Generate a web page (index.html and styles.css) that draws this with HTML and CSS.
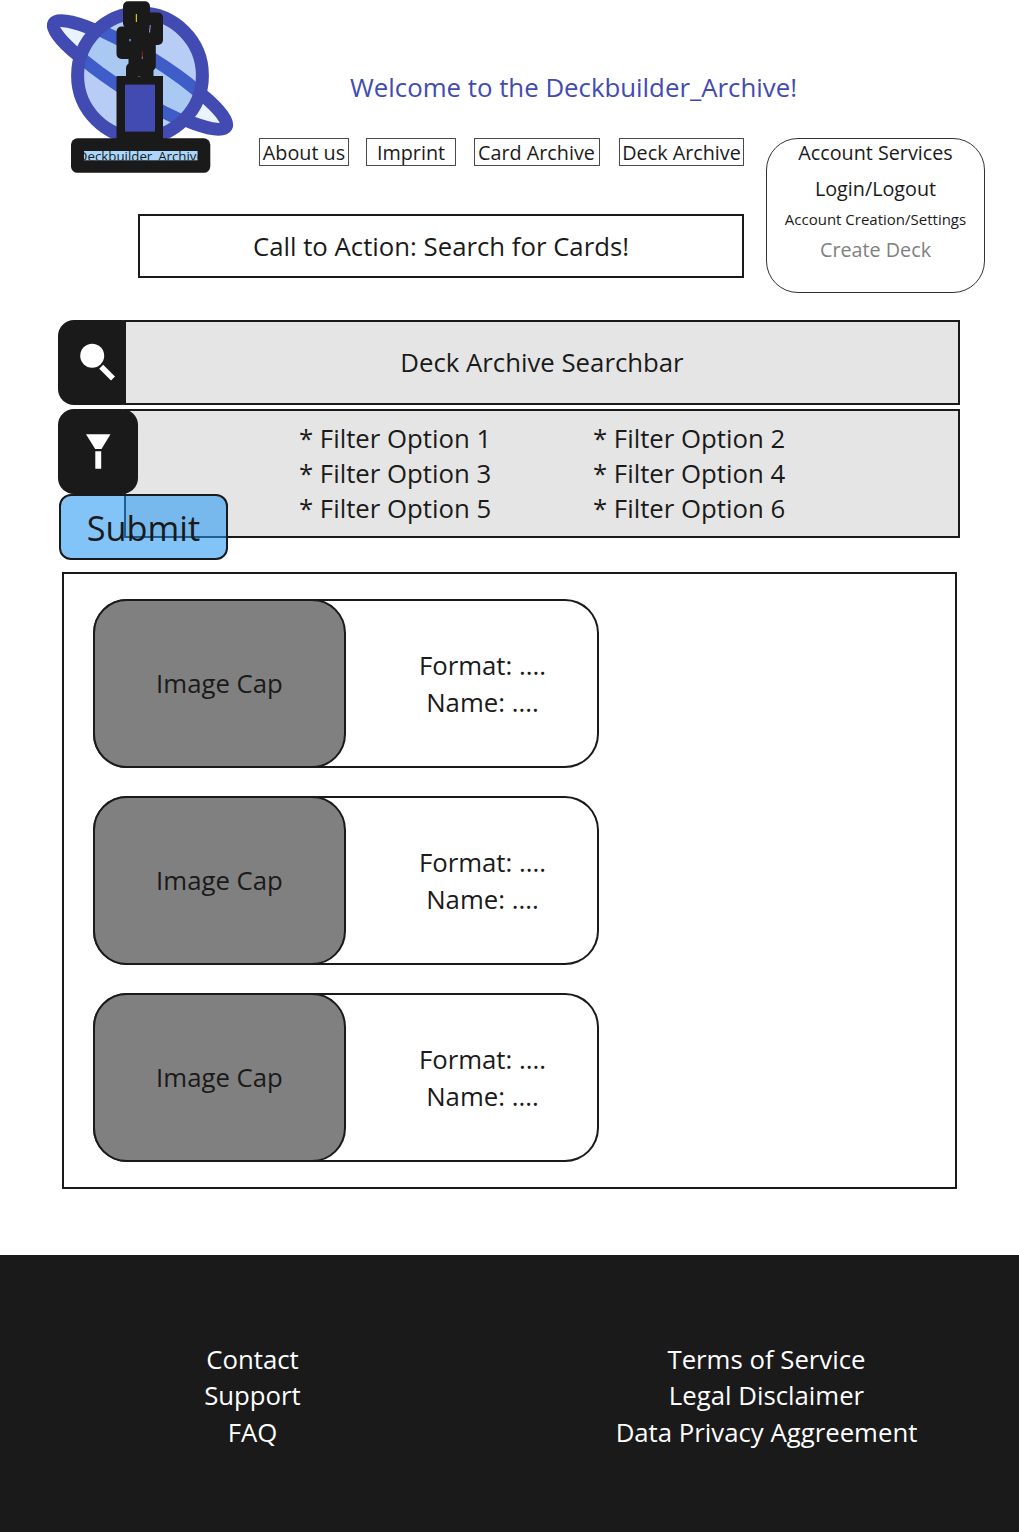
FILE: index.html
```html
<!DOCTYPE html>
<html lang="en">
<head>
<meta charset="utf-8">
<title>Deckbuilder_Archive</title>
<link rel="stylesheet" href="styles.css">
</head>
<body>
<header class="header">
  <svg class="logo" viewBox="0 0 200 180" role="img" aria-label="Deckbuilder_Archive">
    <defs>
      <clipPath id="disc"><circle cx="100" cy="75.5" r="62"/></clipPath>
      <clipPath id="plaque"><rect x="44" y="151" width="113.6" height="9.3"/></clipPath>
    </defs>
    <ellipse cx="100" cy="75" rx="100.5" ry="19.5" transform="rotate(31 100 75)" fill="#e8f3fd" stroke="#424bb2" stroke-width="13"/>
    <circle cx="100" cy="75.5" r="62.4" fill="#b7cdf5"/>
    <g clip-path="url(#disc)">
      <ellipse cx="100" cy="75" rx="100.5" ry="20.5" transform="rotate(32 100 75)" fill="#a9c9f2" stroke="#3f5dc8" stroke-width="12.5"/>
    </g>
    <circle cx="100" cy="75.5" r="62.4" fill="none" stroke="#424bb2" stroke-width="13"/>
    <g fill="#1a1a1a">
      <rect x="83" y="1.3" width="27" height="27" rx="5"/>
      <rect x="96" y="12.5" width="27" height="32.5" rx="5"/>
      <rect x="76.5" y="26.5" width="30" height="32.5" rx="5"/>
      <rect x="88.5" y="24" width="27.3" height="47" rx="5"/>
      <rect x="86" y="63" width="27.5" height="18" rx="5"/>
      <rect x="76.5" y="76" width="46.5" height="66"/>
      <rect x="31" y="138.3" width="139.3" height="34.5" rx="6.5"/>
    </g>
    <rect x="85" y="84.6" width="30" height="47" fill="#424bb2"/>
    <path d="M96.4 14v8" stroke="#c9c327" stroke-width="1.2"/>
    <path d="M110.3 25l-.8 7.5" stroke="#8f9fdf" stroke-width="1"/>
    <path d="M90 39v2.3" stroke="#6d9ce0" stroke-width="1.5"/>
    <path d="M102.3 51.5v5" stroke="#9a2020" stroke-width="1"/>
    <path d="M102.3 56.5v2.5" stroke="#9078d8" stroke-width="1"/>
    <path d="M98 76.5h2.5" stroke="#777" stroke-width=".6"/>
    <rect x="44" y="151" width="113.6" height="9.3" fill="#a9d6fa"/>
    <text class="logo-text" x="37.8" y="160.8" clip-path="url(#plaque)">Deckbuilder_Archive</text>
  </svg>
  <div class="masthead">
    <h1 class="title">Welcome to the Deckbuilder_Archive!</h1>
    <nav class="nav">
      <a class="nav-link">About us</a>
      <a class="nav-link">Imprint</a>
      <a class="nav-link nav-card">Card Archive</a>
      <a class="nav-link nav-deck">Deck Archive</a>
    </nav>
  </div>
  <div class="cta">Call to Action: Search for Cards!</div>
  <aside class="account">
    <span class="account-title">Account Services</span>
    <a class="account-login">Login/Logout</a>
    <a class="account-settings">Account Creation/Settings</a>
    <a class="account-create">Create Deck</a>
  </aside>
</header>

<form class="search">
  <div class="tile tile-search">
    <svg class="icon" viewBox="0 0 80 85"><circle cx="34.2" cy="35.8" r="12" fill="#fff"/><path d="M43.2 46.7L55 58.5" stroke="#fff" stroke-width="5.6"/></svg>
  </div>
  <div class="bar searchbar">Deck Archive Searchbar</div>
  <div class="bar filters">
    <ul class="filter-list">
      <li>* Filter Option 1</li><li>* Filter Option 2</li>
      <li>* Filter Option 3</li><li>* Filter Option 4</li>
      <li>* Filter Option 5</li><li>* Filter Option 6</li>
    </ul>
  </div>
  <div class="tile tile-filter">
    <svg class="icon" viewBox="0 0 80 85"><path d="M28 25.3H52.5L43.5 40H37.2ZM37.3 42.3H43.2V59.7H37.3Z" fill="#fff"/></svg>
  </div>
  <button class="submit" type="button">Submit</button>
</form>

<main class="results">
  <article class="card"><div class="card-image">Image Cap</div><div class="card-info"><span>Format: ....</span><span>Name: ....</span></div></article>
  <article class="card"><div class="card-image">Image Cap</div><div class="card-info"><span>Format: ....</span><span>Name: ....</span></div></article>
  <article class="card"><div class="card-image">Image Cap</div><div class="card-info"><span>Format: ....</span><span>Name: ....</span></div></article>
</main>

<footer class="footer">
  <div class="footer-col"><a>Contact</a><a>Support</a><a>FAQ</a></div>
  <div class="footer-col"><a>Terms of Service</a><a>Legal Disclaimer</a><a>Data Privacy Aggreement</a></div>
</footer>
</body>
</html>
```
FILE: styles.css
```css
* { box-sizing: border-box; }
body {
  margin: 0;
  min-height: 1532px;
  display: flex;
  flex-direction: column;
  background: #fff;
  color: #1a1a1a;
  font: 25.75px/36.5px "Open Sans", sans-serif;
}

.header {
  display: grid;
  grid-template-columns: 219px 485px 218px;
  grid-template-rows: 180px 113px;
  padding-left: 40px;
}
.logo { width: 200px; height: 180px; }
.logo-text { font-size: 13.3px; fill: #1a1a1a; }
.masthead { padding-top: 69px; }
.title {
  margin: 0;
  padding: 0 0 0 91px;
  height: 69px;
  font-size: 25.8px;
  font-weight: 400;
  white-space: nowrap;
  color: #424bb2;
}
.nav { display: flex; gap: 17px; }
.nav-link {
  width: 90px;
  height: 28px;
  border: 1px solid #4a4a4a;
  font-size: 19.75px;
  line-height: 27px;
  text-align: center;
  white-space: nowrap;
}
.nav-card { width: 126px; margin-left: 1px; padding-right: 1px; }
.nav-deck { width: 125px; margin-left: 2px; }
.cta {
  grid-column: 1 / 3;
  grid-row: 2;
  height: 64px;
  margin: 34px 0 0 98px;
  border: 2px solid #1a1a1a;
  line-height: 61px;
  text-align: center;
}
.account {
  grid-column: 3;
  grid-row: 1 / 3;
  display: flex;
  flex-direction: column;
  align-items: center;
  width: 219px;
  height: 155px;
  margin: 138px 0 0 22px;
  border: 1px solid #333;
  border-radius: 32px;
  font-size: 19.75px;
  line-height: 28px;
}
.account-login { margin-top: 8px; }
.account-settings { margin-top: 2px; font-size: 15px; }
.account-create { margin-top: 3px; color: #808080; }

.search {
  display: grid;
  grid-template-columns: 66px 14px 822px;
  grid-template-rows: 85px 4px 85px 44px 22px;
  margin: 27px 0 0 58px;
}
.tile {
  grid-column: 1 / 3;
  border-radius: 16px;
  background: #1a1a1a;
}
.tile-search { grid-row: 1; }
.tile-filter { grid-row: 3; }
.icon { display: block; width: 80px; height: 85px; }
.bar {
  grid-column: 2 / 4;
  border: 2px solid #1a1a1a;
  background: #e5e5e5;
}
.searchbar {
  grid-row: 1;
  line-height: 81px;
  text-align: center;
}
.filters { grid-row: 3 / 5; }
.filter-list {
  display: grid;
  grid-template-columns: 294px auto;
  justify-content: start;
  margin: 10px 0 0;
  padding: 0 0 0 173px;
  list-style: none;
  line-height: 35.2px;
}
.submit {
  grid-column: 1 / 4;
  grid-row: 4 / 6;
  width: 169px;
  margin-left: 1px;
  padding: 2px 0 0;
  border: 2px solid #1a1a1a;
  border-radius: 12px;
  background: rgba(33, 150, 243, .56);
  color: #1a1a1a;
  font: 34.3px/60px "Open Sans", sans-serif;
}

.results {
  display: flex;
  flex-direction: column;
  gap: 28px;
  width: 895px;
  height: 617px;
  margin: 12px 0 0 62px;
  padding: 25px 29px;
  border: 2px solid #1a1a1a;
}
.card {
  display: flex;
  width: 506px;
  height: 169px;
  border-radius: 34px;
  box-shadow: inset 0 0 0 2px #1a1a1a;
}
.card-image {
  width: 253px;
  border: 2px solid #1a1a1a;
  border-radius: 34px;
  background: #808080;
  line-height: 165px;
  text-align: center;
}
.card-info {
  flex: 1;
  display: flex;
  flex-direction: column;
  justify-content: center;
  align-items: center;
  padding-left: 20px;
  line-height: 37px;
}

.footer {
  flex: 1;
  display: grid;
  grid-template-columns: 505px 523px;
  margin-top: 66px;
  padding-top: 86px;
  background: #1a1a1a;
  color: #fff;
  line-height: 36.4px;
}
.footer-col {
  display: flex;
  flex-direction: column;
  align-items: center;
}
```
